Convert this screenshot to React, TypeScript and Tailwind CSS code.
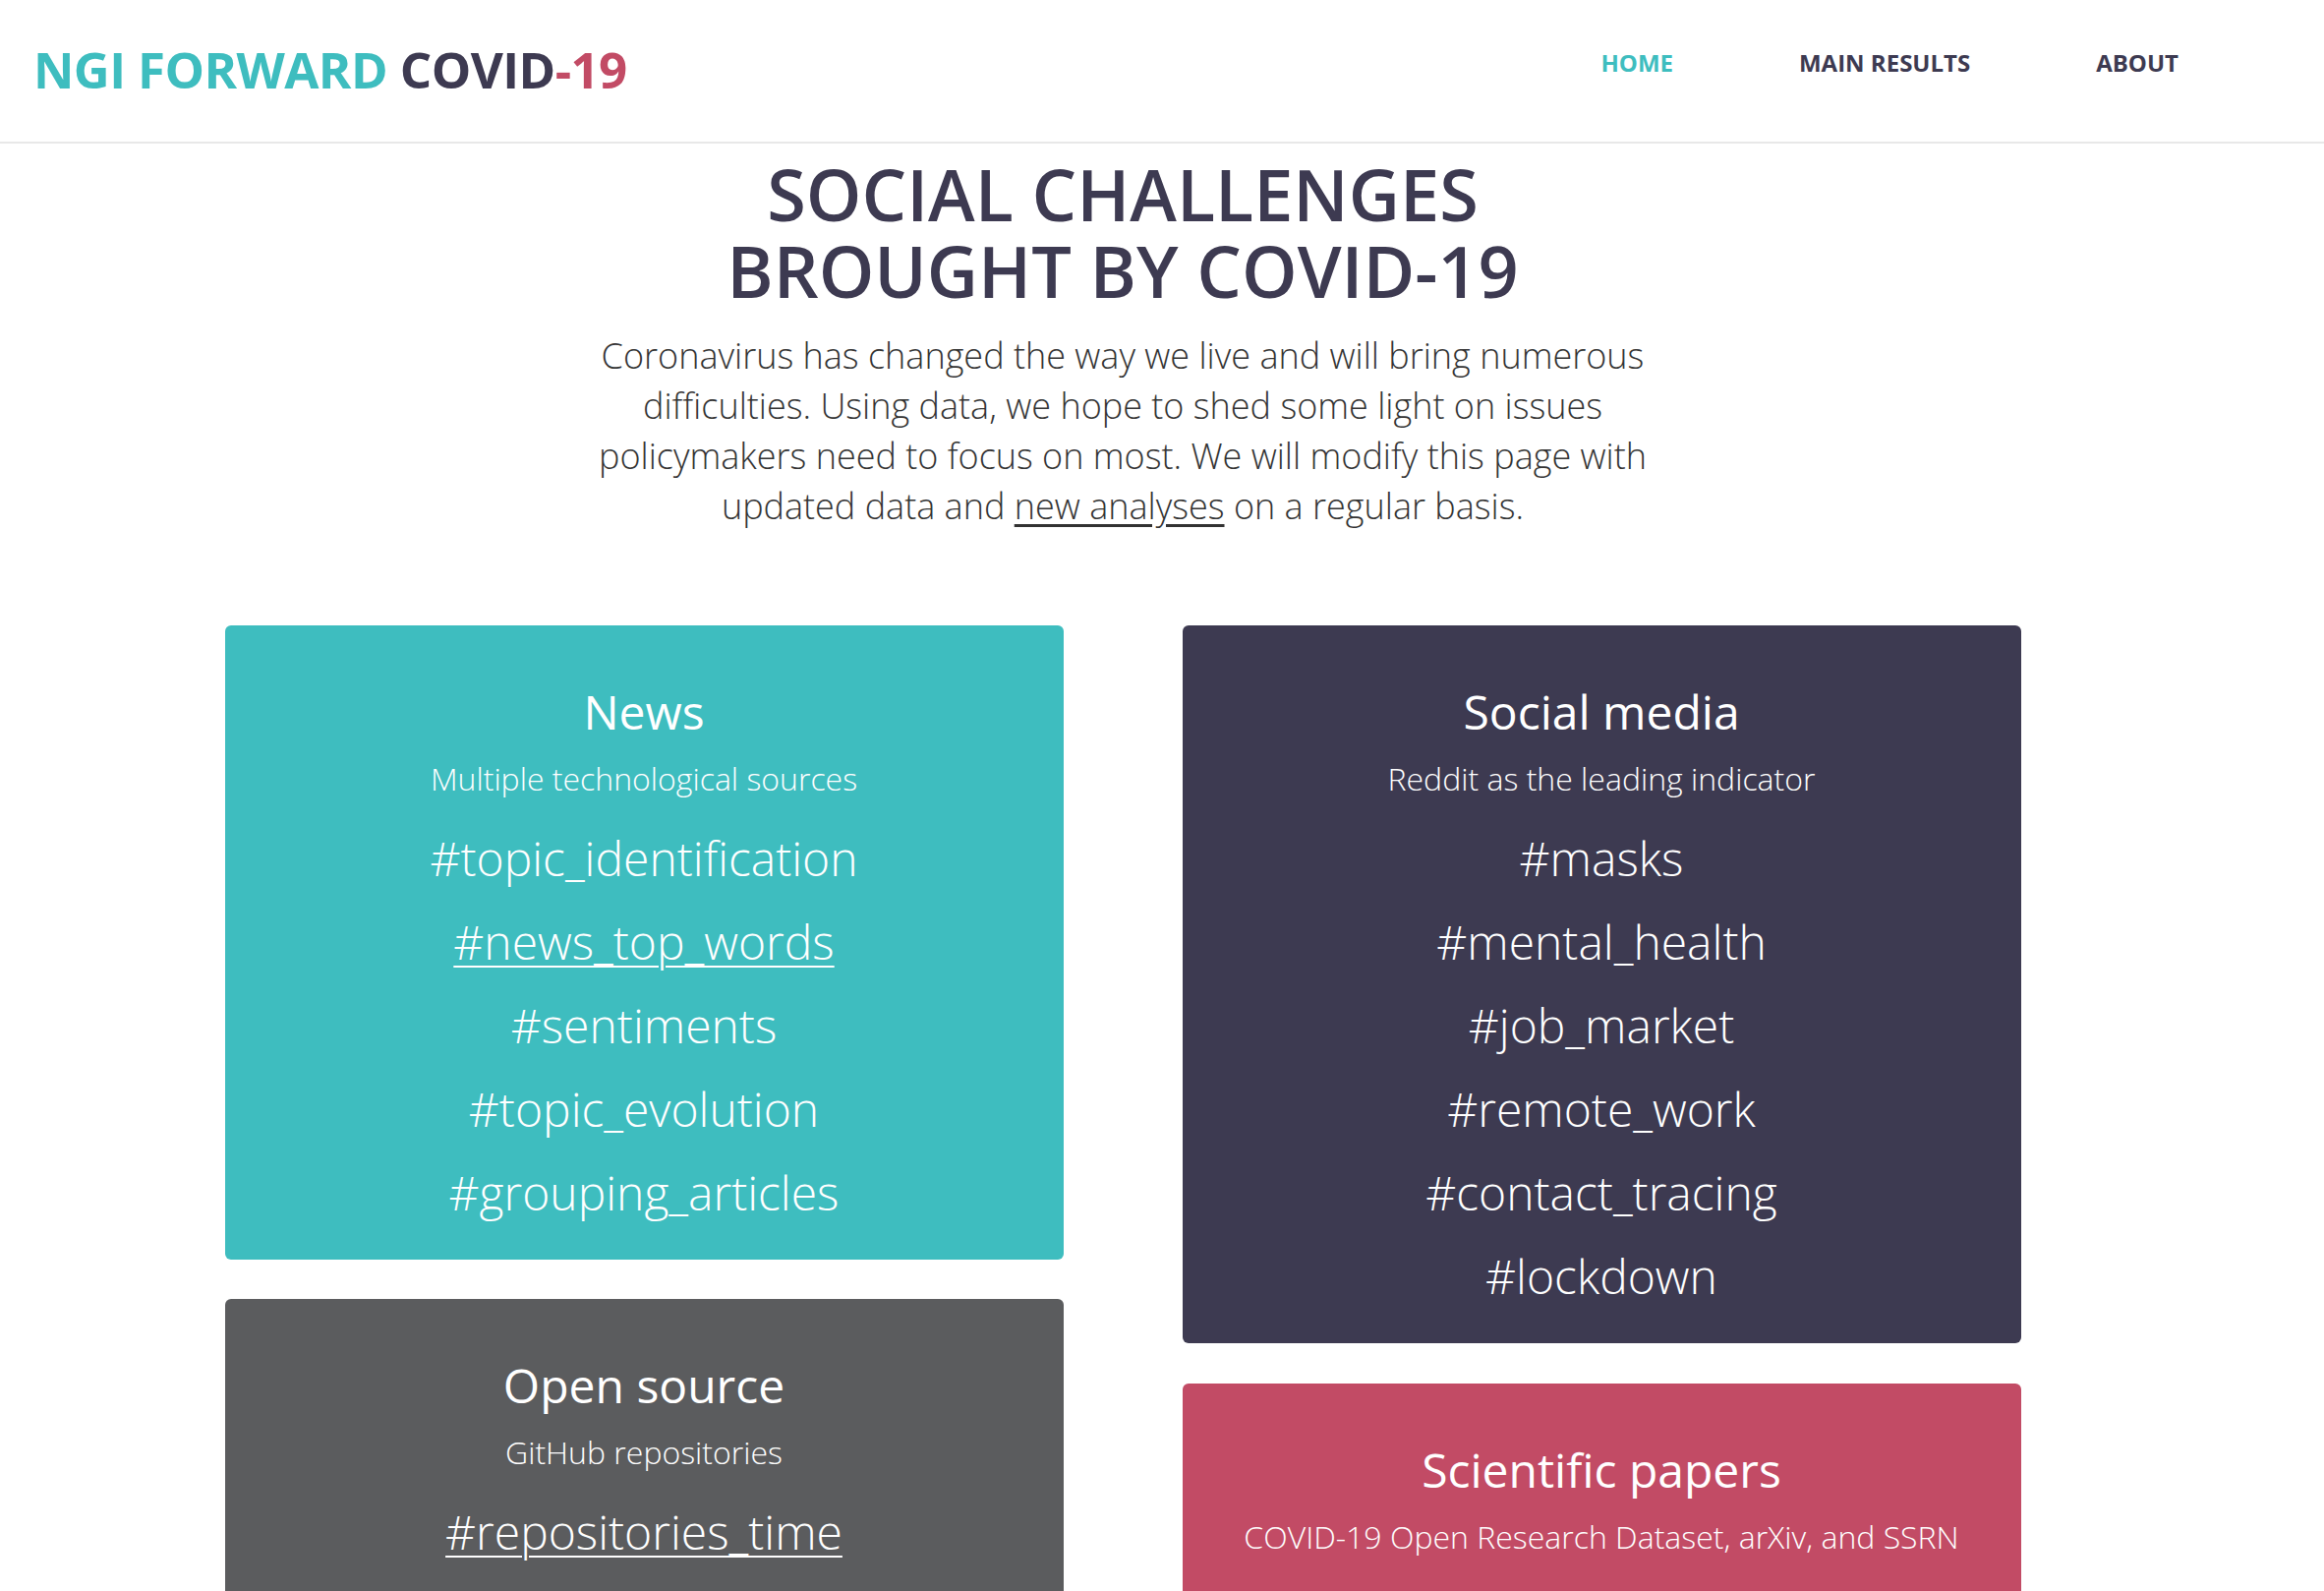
import React from "react";

type Card = {
  title: string;
  subtitle: string;
  tags: { label: string; link?: boolean }[];
  bg: string;
};

const leftCards: Card[] = [
  {
    title: "News",
    subtitle: "Multiple technological sources",
    bg: "bg-[#3ebdbf]",
    tags: [
      { label: "#topic_identification" },
      { label: "#news_top_words", link: true },
      { label: "#sentiments" },
      { label: "#topic_evolution" },
      { label: "#grouping_articles" },
    ],
  },
  {
    title: "Open source",
    subtitle: "GitHub repositories",
    bg: "bg-[#5b5c5e]",
    tags: [
      { label: "#repositories_time", link: true },
      { label: "#programming_languages" },
    ],
  },
];

const rightCards: Card[] = [
  {
    title: "Social media",
    subtitle: "Reddit as the leading indicator",
    bg: "bg-[#3d3a51]",
    tags: [
      { label: "#masks" },
      { label: "#mental_health" },
      { label: "#job_market" },
      { label: "#remote_work" },
      { label: "#contact_tracing" },
      { label: "#lockdown" },
    ],
  },
  {
    title: "Scientific papers",
    subtitle: "COVID-19 Open Research Dataset, arXiv, and SSRN",
    bg: "bg-[#c24b65]",
    tags: [{ label: "#research_topics" }, { label: "#preprints" }],
  },
];

const TopicCard = ({ card }: { card: Card }) => (
  <div className={`${card.bg} rounded-md pt-[56px] pb-[26px] text-white text-center`}>
    <h3 className="text-[48px] leading-[64px] font-normal">{card.title}</h3>
    <p className="mt-[16px] text-[32px] leading-[40px] font-light">{card.subtitle}</p>
    <ul className="mt-[18px]">
      {card.tags.map((t) => (
        <li key={t.label} className="text-[48px] leading-[85px] font-light">
          {t.link ? (
            <a href="#" className="underline decoration-2 underline-offset-[6px]">
              {t.label}
            </a>
          ) : (
            t.label
          )}
        </li>
      ))}
    </ul>
  </div>
);

export default function App() {
  return (
    <div className="min-h-screen bg-white font-['Open_Sans',sans-serif]">
      <header className="h-[146px] border-b-2 border-[#e8e8e8] flex items-start justify-between pl-[34px] pr-[148px]">
        <div className="pt-[45px] text-[51px] leading-none font-bold tracking-[-0.6px]">
          <span className="text-[#3ebdbf]">NGI FORWARD </span>
          <span className="text-[#3d3a51]">COVID</span>
          <span className="text-[#c24b65]">-19</span>
        </div>
        <nav className="pt-[52px] flex gap-[128px] text-[24px] leading-none font-bold">
          <a href="#" className="text-[#3ebdbf]">HOME</a>
          <a href="#" className="text-[#3d3a51]">MAIN RESULTS</a>
          <a href="#" className="text-[#3d3a51]">ABOUT</a>
        </nav>
      </header>

      <main className="w-[2284px] flex flex-col items-center">
        <h1 className="mt-[12px] text-[72px] leading-[78px] font-semibold text-[#3d3a51] text-center">
          SOCIAL CHALLENGES
          <br />
          BROUGHT BY COVID-19
        </h1>
        <p className="mt-[22px] text-[36px] leading-[51px] font-light text-[#333333] text-center whitespace-nowrap">
          Coronavirus has changed the way we live and will bring numerous
          <br />
          difficulties. Using data, we hope to shed some light on issues
          <br />
          policymakers need to focus on most. We will modify this page with
          <br />
          updated data and{" "}
          <a href="#" className="underline underline-offset-[5px]">
            new analyses
          </a>{" "}
          on a regular basis.
        </p>

        <section className="mt-[96px] grid grid-cols-[853px_853px] gap-x-[121px] items-start">
          <div className="flex flex-col gap-[40px]">
            {leftCards.map((c) => (
              <TopicCard key={c.title} card={c} />
            ))}
          </div>
          <div className="flex flex-col gap-[41px]">
            {rightCards.map((c) => (
              <TopicCard key={c.title} card={c} />
            ))}
          </div>
        </section>
      </main>
    </div>
  );
}
